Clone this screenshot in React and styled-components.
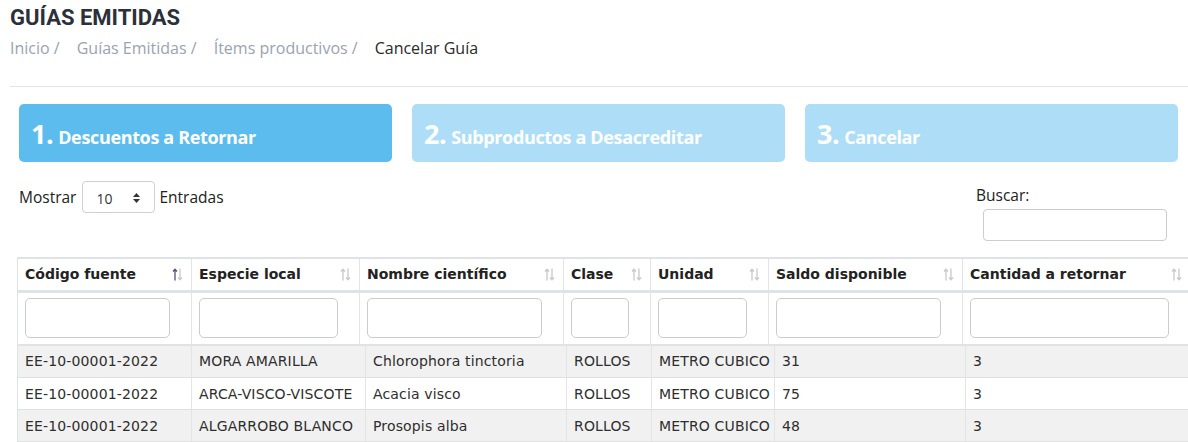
import React from "react";
import styled, { createGlobalStyle } from "styled-components";

const GlobalStyle = createGlobalStyle`
  html, body { margin: 0; padding: 0; background: #fff; overflow-x: hidden; }
  * { box-sizing: border-box; }
`;

const Page = styled.div`
  width: 1188px;
  padding-top: 5px;
  font-family: "Open Sans", sans-serif;
  color: #333;
`;

const HeaderBlock = styled.div`
  padding-left: 10px;
`;

const Title = styled.h1`
  margin: 0;
  font-family: Roboto, sans-serif;
  font-weight: 700;
  font-size: 22px;
  line-height: 26px;
  color: #2b303a;
`;

const Crumbs = styled.ol`
  list-style: none;
  margin: 5px 0 0;
  padding: 0;
  display: flex;
  font-size: 16px;
  line-height: 24px;
`;

const Crumb = styled.li`
  color: ${(p) => (p.$active ? "#2a2a2a" : "#9aa3b1")};
  margin-right: ${(p) => (p.$active ? 0 : "17px")};
  &::after {
    content: ${(p) => (p.$active ? "''" : "' /'")};
  }
`;

const Rule = styled.hr`
  margin: 26px 0 0;
  border: 0;
  border-top: 1px solid #e4e4e4;
`;

const Content = styled.div`
  padding: 0 10px 0 19px;
`;

const Steps = styled.div`
  display: flex;
  gap: 20px;
  margin-top: 17px;
`;

const Step = styled.div`
  flex: 1;
  height: 58px;
  border-radius: 5px;
  background: ${(p) => (p.$active ? "#5cbcee" : "#aedef7")};
  color: #fff;
  display: flex;
  align-items: baseline;
  padding: 15px 12px 0;
  font-weight: 700;
`;

const StepNum = styled.span`
  font-size: 27px;
  line-height: 30px;
  margin-right: 5px;
  letter-spacing: -0.5px;
`;

const StepLabel = styled.span`
  font-size: 18px;
  letter-spacing: -0.35px;
`;

const Controls = styled.div`
  display: flex;
  justify-content: space-between;
  align-items: flex-start;
  margin-top: 19px;
  font-size: 15.5px;
  color: #222;
`;

const LengthBox = styled.label`
  display: flex;
  align-items: center;
  gap: 5px;
  height: 32px;
`;

const Select = styled.div`
  width: 73px;
  height: 32px;
  border: 1px solid #d0d0d0;
  border-radius: 4px;
  display: flex;
  align-items: center;
  justify-content: space-between;
  padding: 2px 13px 0 13px;
  font-size: 14px;
  color: #333;
  margin: 0 -1px 0 1px;
`;

const SearchBox = styled.div`
  width: 202px;
  padding-top: 4px;
  line-height: 20px;
`;

const SearchInput = styled.div`
  margin: 4px 11px 0 7px;
  height: 32px;
  border: 1px solid #ccc;
  border-radius: 4px;
`;

const TableWrap = styled.div`
  margin: 16px 0 0 -2px;
  width: 1173px;
`;

const Table = styled.table`
  border-collapse: collapse;
  table-layout: fixed;
  width: 1173px;
  font-family: "DejaVu Sans", Verdana, sans-serif;
  font-size: 14px;
  border-left: 1px solid #dfe2e6;
`;

const HeadCell = styled.th`
  height: 33px;
  padding: 0 8px 0 7px;
  text-align: left;
  font-weight: 700;
  color: #222;
  border-top: 2px solid #dfe2e6;
  border-bottom: 3px solid #dfe2e6;
  border-right: 1px solid #e4e4e4;
  vertical-align: middle;
  white-space: nowrap;
`;

const HeadInner = styled.div`
  display: flex;
  align-items: center;
  justify-content: space-between;
`;

const FilterCell = styled.th`
  padding: 5px 21px 6px 7px;
  border-bottom: 2px solid #dfe2e6;
  border-right: 1px solid #e4e4e4;
`;

const FilterInput = styled.div`
  height: 40px;
  border: 1px solid #ccc;
  border-radius: 5px;
`;

const Row = styled.tr`
  background: ${(p) => (p.$odd ? "#f1f1f1" : "#fff")};
`;

const Cell = styled.td`
  height: 32px;
  padding: 0 7px;
  color: #2e2e2e;
  border-bottom: 1px solid #e0e0e0;
  border-right: 1px solid #e4e4e4;
  white-space: nowrap;
  overflow: hidden;
  letter-spacing: 0.15px;
`;

const SortIcon = ({ active }) => (
  <svg width="11" height="13" viewBox="0 0 11 13" style={{ flexShrink: 0 }}>
    <path d="M3 12.5V1.5M1 3.5L3 1.2L5 3.5" fill="none" stroke={active ? "#5e4a80" : "#c9c9c9"} strokeWidth="1.3" />
    <path d="M8 0.5V11.5M6 9.5L8 11.8L10 9.5" fill="none" stroke="#c9c9c9" strokeWidth="1.3" />
  </svg>
);

const Caret = () => (
  <svg width="9" height="12" viewBox="0 0 9 12">
    <path d="M4.5 1L8 5H1Z M4.5 11L8 7H1Z" fill="#333" />
  </svg>
);

const headCols = [174, 168, 204, 87, 118, 194, 228];
const bodyCols = [174, 174, 201, 85, 123, 191, 225];
const headers = [
  "Código fuente",
  "Especie local",
  "Nombre científico",
  "Clase",
  "Unidad",
  "Saldo disponible",
  "Cantidad a retornar",
];
const rows = [
  ["EE-10-00001-2022", "MORA AMARILLA", "Chlorophora tinctoria", "ROLLOS", "METRO CUBICO", "31", "3"],
  ["EE-10-00001-2022", "ARCA-VISCO-VISCOTE", "Acacia visco", "ROLLOS", "METRO CUBICO", "75", "3"],
  ["EE-10-00001-2022", "ALGARROBO BLANCO", "Prosopis alba", "ROLLOS", "METRO CUBICO", "48", "3"],
];

export default function App() {
  return (
    <Page>
      <GlobalStyle />
      <HeaderBlock>
        <Title>GUÍAS EMITIDAS</Title>
        <Crumbs>
          <Crumb>Inicio</Crumb>
          <Crumb>Guías Emitidas</Crumb>
          <Crumb>Ítems productivos</Crumb>
          <Crumb $active>Cancelar Guía</Crumb>
        </Crumbs>
        <Rule />
      </HeaderBlock>
      <Content>
        <Steps>
          <Step $active>
            <StepNum>1.</StepNum>
            <StepLabel>Descuentos a Retornar</StepLabel>
          </Step>
          <Step>
            <StepNum>2.</StepNum>
            <StepLabel>Subproductos a Desacreditar</StepLabel>
          </Step>
          <Step>
            <StepNum>3.</StepNum>
            <StepLabel>Cancelar</StepLabel>
          </Step>
        </Steps>
        <Controls>
          <LengthBox>
            Mostrar
            <Select>
              <span>10</span>
              <Caret />
            </Select>
            Entradas
          </LengthBox>
          <SearchBox>
            Buscar:
            <SearchInput />
          </SearchBox>
        </Controls>
        <TableWrap>
          <Table>
            <colgroup>
              {headCols.map((w, i) => (
                <col key={i} style={{ width: w }} />
              ))}
            </colgroup>
            <thead>
              <tr>
                {headers.map((h, i) => (
                  <HeadCell key={h}>
                    <HeadInner>
                      <span>{h}</span>
                      <SortIcon active={i === 0} />
                    </HeadInner>
                  </HeadCell>
                ))}
              </tr>
              <tr>
                {headers.map((h) => (
                  <FilterCell key={h}>
                    <FilterInput />
                  </FilterCell>
                ))}
              </tr>
            </thead>
          </Table>
          <Table>
            <colgroup>
              {bodyCols.map((w, i) => (
                <col key={i} style={{ width: w }} />
              ))}
            </colgroup>
            <tbody>
              {rows.map((r, ri) => (
                <Row key={ri} $odd={ri % 2 === 0}>
                  {r.map((c, ci) => (
                    <Cell key={ci}>{c}</Cell>
                  ))}
                </Row>
              ))}
            </tbody>
          </Table>
        </TableWrap>
      </Content>
    </Page>
  );
}
